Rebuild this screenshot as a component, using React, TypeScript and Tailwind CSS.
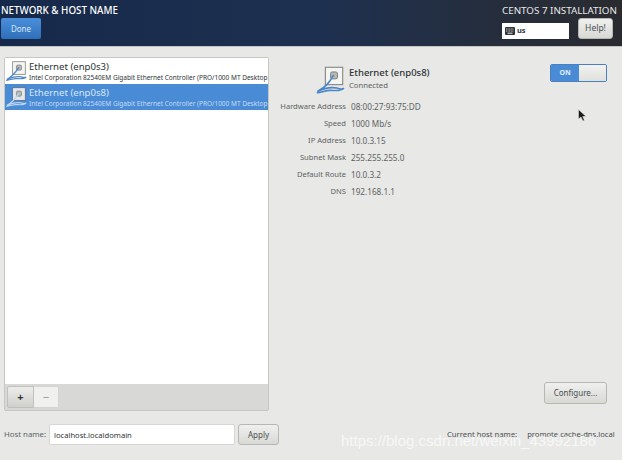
import React from "react";

const font = { fontFamily: '"Noto Sans", "Open Sans", sans-serif' };

const EthernetIcon = ({ selected, size = 26 }: { selected?: boolean; size?: number }) => {
  const cable = selected ? "#bcd6f0" : "#4a86c8";
  return (
    <svg width={size} height={size} viewBox="0 0 26 26" fill="none">
      <rect x="9" y="2" width="15" height="15" fill={selected ? "#e4e8ec" : "#f4f4f2"} stroke={selected ? "#5f6f80" : "#8a8a88"} strokeWidth="1" />
      <rect x="13.5" y="6" width="6" height="6" rx="1.5" fill="#b8b8b6" stroke="#77777a" strokeWidth="0.8" />
      <path d="M16 9 C13 14 10 19 2 23 C8 20 14 19 19 20 C22 21 24 21 25 20 C23 23 17 22 13 22 C9 22 5 24 2 24" stroke={cable} strokeWidth="1.4" strokeLinecap="round" />
    </svg>
  );
};

const Row = ({ name, selected }: { name: string; selected?: boolean }) => (
  <div className={`flex h-[26px] items-center overflow-hidden ${selected ? "bg-[#4a8bd6]" : "bg-white"}`}>
    <div className="w-[22px] shrink-0">
      <EthernetIcon selected={selected} size={22} />
    </div>
    <div className="ml-[2px] min-w-0 whitespace-nowrap">
      <div className={`text-[9.6px] leading-[13px] ${selected ? "text-[#d4e6f8]" : "text-[#2e3436]"}`}>{name}</div>
      <div className={`text-[6.5px] leading-[10px] ${selected ? "text-[#c4dcf4]" : "text-[#2e3436]"}`}>
        Intel Corporation 82540EM Gigabit Ethernet Controller (PRO/1000 MT Desktop
      </div>
    </div>
  </div>
);

const details = [
  ["Hardware Address", "08:00:27:93:75:DD"],
  ["Speed", "1000 Mb/s"],
  ["IP Address", "10.0.3.15"],
  ["Subnet Mask", "255.255.255.0"],
  ["Default Route", "10.0.3.2"],
  ["DNS", "192.168.1.1"],
];

const btn = "rounded-[3px] border border-[#b6b6b3] bg-gradient-to-b from-[#f0f0ee] to-[#d8d8d5] text-[#4a4f50]";

export default function App() {
  return (
    <div className="relative flex h-[460px] w-[622px] flex-col overflow-hidden bg-[#e8e8e6]" style={font}>
      <header className="flex h-[47px] shrink-0 justify-between border-b border-[#c4c4c2] bg-gradient-to-r from-[#16294a] via-[#1d3050] to-[#2a2b2f]">
        <div className="pl-[1px]">
          <div className="mt-[4px] text-[9.8px] leading-[14px] font-medium whitespace-nowrap text-white">NETWORK &amp; HOST NAME</div>
          <button className="block h-[21px] w-[40px] rounded-[2px] bg-gradient-to-b from-[#4a8fdc] to-[#2f6fb8] text-[8px] text-[#d8e8f8]">
            Done
          </button>
        </div>
        <div className="flex w-[120px] flex-col">
          <div className="mt-[4px] text-[9.8px] leading-[14px] whitespace-nowrap text-[#e8e8e8]">CENTOS 7 INSTALLATION</div>
          <div className="flex items-start">
            <div className="mt-[5px] flex h-[16px] w-[67px] items-center bg-white pl-[3px]">
              <svg width="10" height="8" viewBox="0 0 10 8">
                <rect width="10" height="8" rx="1" fill="#2e3436" />
                <path d="M1 2h8M1 4h8" stroke="#fff" strokeWidth="0.8" strokeDasharray="1 0.6" />
                <path d="M2.5 6.2h5" stroke="#fff" strokeWidth="0.9" />
              </svg>
              <span className="ml-[2px] text-[7.5px] font-bold text-[#2e3436]">us</span>
            </div>
            <button className={`ml-[9px] block h-[21px] w-[35px] text-[8.5px] ${btn}`}>Help!</button>
          </div>
        </div>
      </header>

      <main className="flex flex-1 flex-col pl-[4px]">
        <div className="mt-[10px] flex">
          <div className="flex h-[354px] w-[265px] shrink-0 flex-col rounded-[2px] border border-[#c6c6c3] bg-[#d8d8d6]">
            <div className="flex-1 bg-white">
              <Row name="Ethernet (enp0s3)" />
              <Row name="Ethernet (enp0s8)" selected />
            </div>
            <div className="flex h-[26px] shrink-0 items-center pl-[2px]">
              <button className="flex h-[22px] w-[27px] items-center justify-center rounded-l-[2px] border border-[#c0c0bd] bg-gradient-to-b from-[#ececea] to-[#d0d0cd] text-[11px] font-bold text-[#2e3436]">
                +
              </button>
              <button className="flex h-[22px] w-[25px] items-center justify-center rounded-r-[2px] border border-l-0 border-[#d4d4d2] bg-[#f0f0ee] text-[11px] text-[#8f9192]">
                −
              </button>
            </div>
          </div>

          <section className="relative ml-[10px] flex-1 pt-[8px]">
            <div className="ml-[36px] flex h-[33px]">
              <EthernetIcon size={30} />
              <div className="ml-[4px] pt-[1px]">
                <div className="text-[9.5px] leading-[14px] font-medium whitespace-nowrap text-[#2e3436]">Ethernet (enp0s8)</div>
                <div className="mt-[0px] text-[7.7px] leading-[11px] text-[#5c6364]">Connected</div>
              </div>
            </div>
            <div className="mt-[3px] flex flex-col gap-[6px]">
              {details.map(([k, v]) => (
                <div key={k} className="flex leading-[11px] text-[#5c6364]">
                  <div className="w-[67px] shrink-0 text-right text-[7.6px] whitespace-nowrap">{k}</div>
                  <div className="ml-[5px] text-[8.2px] whitespace-nowrap">{v}</div>
                </div>
              ))}
            </div>
            <div className="absolute top-[7px] right-[15px] flex h-[18px] w-[57px] overflow-hidden rounded-[2px] border border-[#4a80c0]">
              <div className="flex w-[28px] items-center justify-center bg-[#4a8bd6] text-[7px] font-bold text-[#e4effa]">ON</div>
              <div className="flex-1 bg-gradient-to-b from-[#f2f2f0] to-[#e0e0dd]" />
            </div>
            <svg className="absolute top-[52px] right-[35px]" width="9" height="13" viewBox="0 0 9 13">
              <path d="M0.5 0.5V10L3 8L4.8 12L6.4 11.2L4.7 7.5H8Z" fill="#1a1a1a" stroke="#e8e8e6" strokeWidth="0.5" />
            </svg>
            <button className={`absolute top-[325px] right-[15px] h-[22px] w-[63px] text-[8px] ${btn}`}>Configure...</button>
          </section>
        </div>

        <div className="mt-[13px] flex items-center">
          <span className="w-[45px] shrink-0 text-[7.8px] whitespace-nowrap text-[#5c6364]">Host name:</span>
          <input
            readOnly
            value="localhost.localdomain"
            className="h-[21px] w-[186px] rounded-[2px] border border-[#d6d6d3] bg-white pl-[4px] text-[7.6px] text-[#2e3436] outline-none"
          />
          <button className={`ml-[3px] h-[21px] w-[41px] shrink-0 text-[8px] ${btn}`}>Apply</button>
          <span className="ml-[168px] text-[7.7px] whitespace-nowrap text-[#4a4f50]">Current host name:</span>
          <span className="ml-[10px] text-[7.6px] whitespace-nowrap text-[#4a4f50]">promote.cache-dns.local</span>
        </div>
      </main>

      <div
        className="pointer-events-none absolute top-[431px] left-[341px] text-[15px] leading-[20px] whitespace-nowrap text-white/65"
        style={{ fontFamily: '"Liberation Sans", sans-serif' }}
      >
        https://blog.csdn.net/weixin_43992186
      </div>
    </div>
  );
}
